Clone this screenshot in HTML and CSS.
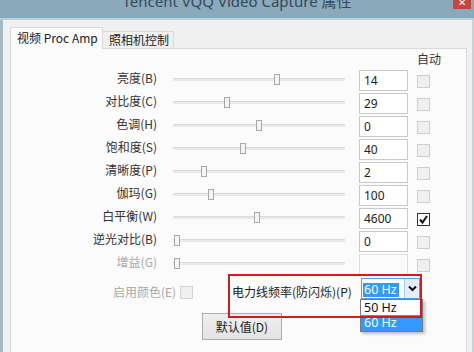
FILE: index.html
```html
<!DOCTYPE html>
<html lang="zh-CN">
<head>
<meta charset="utf-8">
<title>Tencent VQQ Video Capture 属性</title>
<link rel="stylesheet" href="styles.css">
</head>
<body>
<div class="titlebar">
  <span class="title">Tencent VQQ Video Capture 属性</span>
  <span class="close">✕</span>
</div>
<div class="frame">
  <div class="tabs">
    <div class="tab active">视频 Proc Amp</div>
    <div class="tab">照相机控制</div>
  </div>
  <div class="panel">
    <div class="grid">
      <div class="hdr">自动</div>

      <div class="lbl">亮度(B)</div>
      <div class="sl"><div class="track"><div class="thumb" style="left:101px"></div></div></div>
      <div class="ed"><div class="box">14</div></div>
      <div class="ck"><div class="cb"></div></div>

      <div class="lbl">对比度(C)</div>
      <div class="sl"><div class="track"><div class="thumb" style="left:51px"></div></div></div>
      <div class="ed"><div class="box">29</div></div>
      <div class="ck"><div class="cb"></div></div>

      <div class="lbl">色调(H)</div>
      <div class="sl"><div class="track"><div class="thumb" style="left:83px"></div></div></div>
      <div class="ed"><div class="box">0</div></div>
      <div class="ck"><div class="cb"></div></div>

      <div class="lbl">饱和度(S)</div>
      <div class="sl"><div class="track"><div class="thumb" style="left:67px"></div></div></div>
      <div class="ed"><div class="box">40</div></div>
      <div class="ck"><div class="cb"></div></div>

      <div class="lbl">清晰度(P)</div>
      <div class="sl"><div class="track"><div class="thumb" style="left:28px"></div></div></div>
      <div class="ed"><div class="box">2</div></div>
      <div class="ck"><div class="cb"></div></div>

      <div class="lbl">伽玛(G)</div>
      <div class="sl"><div class="track"><div class="thumb" style="left:35px"></div></div></div>
      <div class="ed"><div class="box">100</div></div>
      <div class="ck"><div class="cb"></div></div>

      <div class="lbl">白平衡(W)</div>
      <div class="sl"><div class="track"><div class="thumb" style="left:81px"></div></div></div>
      <div class="ed"><div class="box">4600</div></div>
      <div class="ck"><div class="cb checked"><svg width="11" height="11" viewBox="0 0 11 11"><polyline points="2,5.5 4.5,8.5 9,2" fill="none" stroke="#111" stroke-width="2"/></svg></div></div>

      <div class="lbl">逆光对比(B)</div>
      <div class="sl"><div class="track"><div class="thumb" style="left:1px"></div></div></div>
      <div class="ed"><div class="box">0</div></div>
      <div class="ck"><div class="cb"></div></div>

      <div class="lbl disabled">增益(G)</div>
      <div class="sl"><div class="track"><div class="thumb" style="left:1px"></div></div></div>
      <div class="ed"><div class="box off"></div></div>
      <div class="ck"><div class="cb"></div></div>
    </div>

    <div class="bottom">
      <div class="blabel disabled">启用颜色(E)</div>
      <div class="cb bcb"></div>
      <div class="plabel">电力线频率(防闪烁)(P)</div>
      <div class="combo">
        <div class="cval"><span class="sel">60 Hz</span></div>
        <div class="carrow"><svg width="9" height="7" viewBox="0 0 9 7"><polyline points="1,1.5 4.5,5 8,1.5" fill="none" stroke="#111" stroke-width="2"/></svg></div>
        <div class="list">
          <div class="opt">50 Hz</div>
          <div class="opt hl">60 Hz</div>
        </div>
      </div>
      <div class="mark"></div>
    </div>

    <div class="btnrow">
      <div class="btn">默认值(D)</div>
    </div>
  </div>
</div>
</body>
</html>
```
FILE: styles.css
```css
* { box-sizing: border-box; }
html, body { margin: 0; padding: 0; }
body {
  width: 474px;
  height: 352px;
  overflow: hidden;
  background: #f0f0f0;
  font-family: "Noto Sans CJK SC", "Noto Sans", sans-serif;
  font-size: 12px;
  color: #262626;
}
.titlebar {
  position: relative;
  height: 20px;
  background: #8aa9bb;
  border-bottom: 2px solid #bccdd8;
  overflow: hidden;
  text-align: center;
}
.title {
  display: block;
  font-family: "Noto Sans", "Noto Sans CJK SC", sans-serif;
  font-size: 15px;
  line-height: 18px;
  margin-top: -8px;
  color: #34495a;
}
.close {
  position: absolute;
  right: 3px;
  top: 0;
  width: 18px;
  height: 9px;
  background: #c8443d;
  color: #fff;
  font-size: 10px;
  line-height: 3px;
  text-align: center;
  overflow: hidden;
}
.frame {
  height: 332px;
  display: flex;
  flex-direction: column;
  border-left: 3px solid #a5bac7;
  border-right: 2px solid #c7d3da;
  padding: 7px 5px 0 7px;
  background: #f0f0f0;
}
.tabs {
  display: flex;
  align-items: flex-end;
  height: 21px;
}
.tab {
  height: 17px;
  padding: 0 4px 0 6px;
  border: 1px solid #d9d9d9;
  border-left: none;
  border-bottom: none;
  background: #f0f0f0;
  line-height: 16px;
  color: #222;
  white-space: nowrap;
}
.tab.active {
  width: 93px;
  height: 22px;
  margin-bottom: -1px;
  border-left: 1px solid #d9d9d9;
  background: #fbfbfb;
  line-height: 20px;
  padding: 0 0 0 6px;
  position: relative;
  z-index: 1;
}
.panel {
  flex: 1;
  border: 1px solid #d9d9d9;
  border-bottom: none;
  background: #fbfbfb;
  padding-top: 3px;
}
.grid {
  display: grid;
  grid-template-columns: 146px 191px 60px 22px;
  grid-template-rows: 18px;
  grid-auto-rows: 23px;
}
.hdr {
  grid-column: 4;
  padding-left: 9px;
  white-space: nowrap;
  line-height: 14px;
  color: #333;
}
.lbl {
  grid-column: 1;
  text-align: right;
  line-height: 16px;
  color: #333;
  white-space: nowrap;
}
.disabled { color: #a9a9a9; }
.sl { padding-left: 16px; padding-top: 8px; }
.track {
  position: relative;
  width: 172px;
  height: 3px;
  background: #e9e9e9;
  border-top: 1px solid #dadada;
}
.thumb {
  position: absolute;
  top: -5px;
  width: 6px;
  height: 11px;
  border: 1px solid #a8a8a8;
  background: #f4f4f4;
}
.ed { padding-left: 11px; }
.box {
  width: 49px;
  height: 21px;
  border: 1px solid #c9c9c9;
  background: #fff;
  font-family: "Noto Sans", sans-serif;
  font-size: 12px;
  line-height: 19px;
  padding-left: 4px;
  color: #222;
}
.box.off { background: #fbfbfb; border-color: #dedede; }
.ck { padding-left: 9px; padding-top: 5px; }
.cb {
  width: 13px;
  height: 13px;
  border: 1px solid #cfcfcf;
  background: #f0f0f0;
}
.cb.checked {
  border-color: #333;
  background: #fff;
  display: flex;
  align-items: center;
  justify-content: center;
}
.bottom {
  position: relative;
  display: flex;
  align-items: flex-start;
  height: 21px;
  margin-top: 1px;
  padding-left: 102px;
}
.blabel {
  width: 67px;
  margin-top: 6px;
  line-height: 16px;
  white-space: nowrap;
}
.bcb { margin-top: 8px; margin-right: 39px; border-color: #d4d4d4; }
.plabel {
  width: 129px;
  margin-top: 6px;
  line-height: 16px;
  white-space: nowrap;
  color: #222;
}
.combo {
  position: relative;
  width: 59px;
  height: 21px;
  display: flex;
  border: 1px solid #5a9de0;
  background: #fff;
}
.cval {
  flex: 1;
  padding: 1px 0 0 1px;
}
.sel {
  display: inline-block;
  background: #3399ff;
  color: #fff;
  font-family: "Noto Sans", sans-serif;
  font-size: 12.5px;
  line-height: 14px;
  padding: 0 2px 0 1px;
}
.carrow {
  width: 15px;
  background: #e3eefa;
  border-left: 1px solid #a9c9ea;
  display: flex;
  align-items: center;
  justify-content: center;
}
.list {
  position: absolute;
  left: -2px;
  top: 20px;
  width: 63px;
  background: #fff;
  border: 1px solid #7a7a7a;
  box-shadow: 2px 2px 3px rgba(0,0,0,0.25);
  z-index: 2;
}
.opt {
  height: 15px;
  padding-left: 3px;
  font-family: "Noto Sans", sans-serif;
  font-size: 12.5px;
  line-height: 15px;
  color: #111;
}
.opt.hl { background: #3399ff; color: #fff; height: 16px; }
.mark {
  position: absolute;
  left: 217px;
  top: -4px;
  width: 194px;
  height: 44px;
  border: 2px solid #d21a1f;
  z-index: 3;
}
.btnrow {
  padding-left: 191px;
  margin-top: 14px;
}
.btn {
  width: 80px;
  height: 27px;
  border: 1px solid #adadad;
  background: linear-gradient(#efefef, #e3e3e3);
  text-align: center;
  line-height: 25px;
  color: #222;
}
```
